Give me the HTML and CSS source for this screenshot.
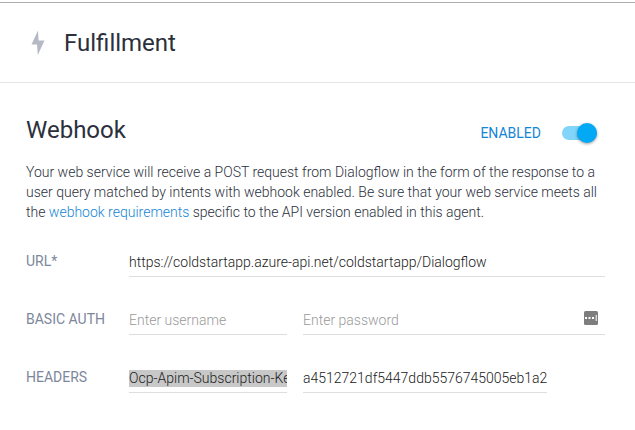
FILE: index.html
```html
<!DOCTYPE html>
<html lang="en">
<head>
<meta charset="utf-8">
<title>Fulfillment</title>
<link rel="stylesheet" href="styles.css">
</head>
<body>
<header class="page-header">
  <svg class="bolt" viewBox="0 0 14 26" aria-hidden="true"><path d="M7 0.5 L0.5 14.5 H6 L6.8 25 L13.5 10.5 H7.6 Z"/></svg>
  <h1 class="title">Fulfillment</h1>
</header>
<main class="content">
  <div class="section-head">
    <h2 class="title">Webhook</h2>
    <label class="toggle">
      <span>ENABLED</span>
      <input class="switch" type="checkbox" role="switch" checked>
    </label>
  </div>
  <p class="description">Your web service will receive a POST request from Dialogflow in the form of the response to a user query matched by intents with webhook enabled. Be sure that your web service meets all the <a href="#">webhook requirements</a> specific to the API version enabled in this agent.</p>
  <form class="fields">
    <div class="row">
      <label class="name" for="url">URL*</label>
      <div class="field wide"><input id="url" type="text" value="https://coldstartapp.azure-api.net/coldstartapp/Dialogflow"></div>
    </div>
    <div class="row">
      <label class="name" for="username">BASIC AUTH</label>
      <div class="field key"><input id="username" type="text" placeholder="Enter username"></div>
      <div class="field wide">
        <input type="password" placeholder="Enter password" aria-label="Password">
        <button class="fill" type="button" aria-label="Fill password">
          <svg viewBox="0 0 14 14"><rect width="14" height="14" rx="1.5" fill="#7d7d7d"/><path d="M1 6h2v2H1zM4.5 6h2v2h-2zM8 6h2v2H8zM11.7 4h1v6h-1z" fill="#fff"/></svg>
        </button>
      </div>
    </div>
    <div class="row">
      <label class="name" for="header-key">HEADERS</label>
      <div class="field key"><input id="header-key" class="selected" type="text" value="Ocp-Apim-Subscription-Key"></div>
      <div class="field wide with-action"><input type="text" value="a4512721df5447ddb5576745005eb1a2" aria-label="Header value"></div>
    </div>
  </form>
</main>
</body>
</html>
```
FILE: styles.css
```css
* {
  box-sizing: border-box;
}

body {
  margin: 0;
  padding-top: 2px;
  background: #fff;
  color: #2b303c;
  font: 300 14px/20px Roboto, "Liberation Sans", sans-serif;
}

.page-header {
  display: flex;
  align-items: center;
  gap: 19px;
  height: 81px;
  padding: 0 31px;
  border-top: 1px solid #aeaeae;
  border-bottom: 1px solid #e4e4e4;
}

.bolt {
  width: 14px;
  height: 26px;
  fill: #b5b9c4;
}

.title {
  margin: 0;
  font-size: 24px;
  line-height: 32px;
  font-weight: 400;
}

.content {
  padding: 31px 30px 24px 26px;
}

.section-head {
  display: flex;
  align-items: center;
  justify-content: space-between;
  padding-right: 8px;
}

.toggle {
  display: flex;
  align-items: center;
  gap: 21px;
  padding-top: 6px;
  color: #1485d6;
  font-weight: 400;
}

.switch {
  appearance: none;
  display: flex;
  align-items: center;
  justify-content: flex-end;
  width: 35px;
  height: 14px;
  margin: 0;
  background: #81d4fa;
  border-radius: 7px;
}

.switch::before {
  content: "";
  flex: none;
  width: 20px;
  height: 20px;
  border-radius: 50%;
  background: #03a9f4;
  box-shadow: 0 1px 3px rgba(0, 0, 0, 0.4);
}

.description {
  margin: 16px 0 0;
}

.description a {
  color: #1485d6;
  text-decoration: none;
}

.fields {
  display: grid;
  gap: 30px;
  margin-top: 27px;
}

.row {
  display: flex;
  align-items: flex-start;
}

.name {
  flex: 0 0 103px;
  color: #7d879b;
  font-weight: 400;
  line-height: 24px;
}

.field {
  display: flex;
  align-items: center;
  min-width: 0;
  height: 28px;
  padding: 5px 0;
  border-bottom: 1px solid #dedede;
}

.key {
  flex: 0 0 158px;
  margin-right: 16px;
}

.wide {
  flex: 1;
}

.with-action {
  margin-right: 58px;
}

.field input {
  flex: 1;
  min-width: 0;
  height: 17px;
  padding: 0 0 2px;
  border: 0;
  outline: 0;
  background: none;
  color: #212121;
  font: inherit;
  line-height: 16px;
}

.field input::placeholder {
  color: #9a9a9a;
}

.field .selected {
  background: #c8c8c8;
}

.fill {
  display: flex;
  margin: 0 7px 6px 0;
  padding: 0;
  border: 0;
  background: none;
}

.fill svg {
  width: 14px;
  height: 14px;
}
```
